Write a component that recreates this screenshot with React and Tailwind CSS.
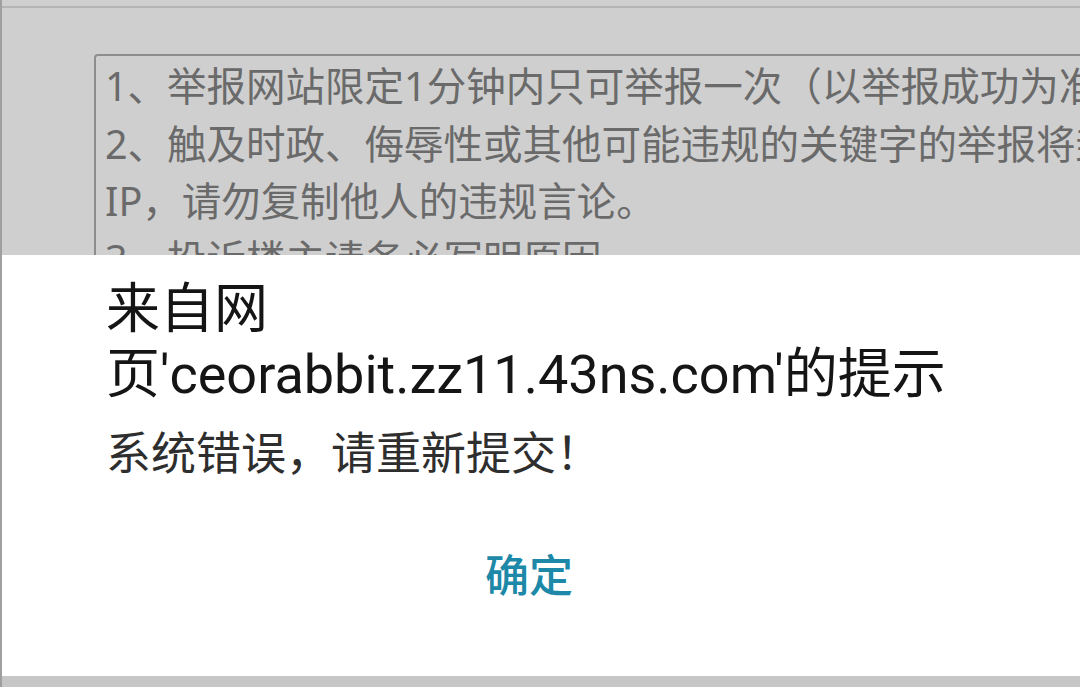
const notice = [
  "1、举报网站限定1分钟内只可举报一次（以举报成功为准）",
  "2、触及时政、侮辱性或其他可能违规的关键字的举报将封禁",
  "IP，请勿复制他人的违规言论。",
  "3、投诉楼主请务必写明原因",
];

const App = () => {
  return (
    <div className="relative w-[1080px] h-[687px] overflow-hidden bg-[#cfcfcf] border-l-2 border-[#9f9f9f]">
      {/* dimmed page behind the dialog */}
      <div className="h-[6px]"></div>
      <div className="h-[2px] bg-[#b4b4b4]"></div>
      <div className="pl-[92px] pt-[46px]">
        <div className="w-[1200px] h-[400px] border-2 border-[#8d8d8d] rounded-[4px] px-[9px] pt-[2px] text-[39.5px] leading-[57.5px] text-[#6a6a6a] font-['Noto_Sans','Noto_Sans_CJK_SC',sans-serif]">
          {notice.map((line, i) => (
            <div key={i} className="whitespace-nowrap">
              {line}
            </div>
          ))}
        </div>
      </div>

      {/* alert dialog */}
      <div className="absolute left-0 right-0 top-[255px] h-[421px] bg-white flex flex-col pl-[104px] pt-[22px]">
        <div className="text-[54px] leading-[65px] text-[#151515] font-['Roboto','Noto_Sans_CJK_SC',sans-serif]">
          来自网
          <br />
          页'ceorabbit.zz11.43ns.com'的提示
        </div>
        <div className="mt-[20px] text-[45px] leading-[56px] text-[#2e2e2e] font-['Roboto','Noto_Sans_CJK_SC',sans-serif]">
          系统错误，请重新提交！
        </div>
        <div className="flex justify-center pr-[128px] mt-[66px]">
          <button className="text-[44px] leading-[56px] font-medium text-[#1d88a7] font-['Roboto','Noto_Sans_CJK_SC',sans-serif]">
            确定
          </button>
        </div>
      </div>
      <div className="absolute left-0 right-0 bottom-0 h-[11px] bg-[#c6c6c6]"></div>
    </div>
  );
};

export default App;
